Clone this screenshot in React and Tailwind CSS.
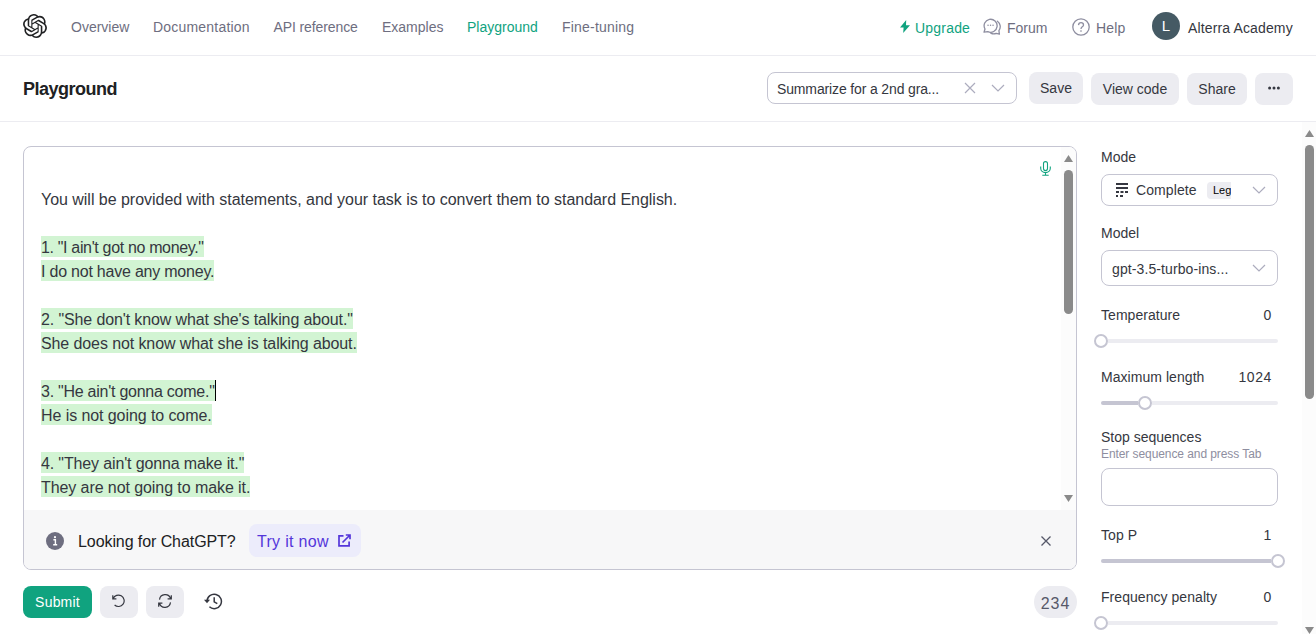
import React from "react";
import { SiOpenai } from "react-icons/si";

const navLinks = [
  { label: "Overview", cls: "w-[82px] text-[#6e6e80]" },
  { label: "Documentation", cls: "w-[120.5px] tracking-[0.2px] text-[#6e6e80]" },
  { label: "API reference", cls: "w-[108.5px] tracking-[-0.1px] text-[#6e6e80]" },
  { label: "Examples", cls: "w-[85px] text-[#6e6e80]" },
  { label: "Playground", cls: "w-[95px] text-[#10a37f]" },
  { label: "Fine-tuning", cls: "w-[90px] tracking-[0.2px] text-[#6e6e80]" },
];

function Chevron() {
  return (
    <svg className="h-3 w-3.5 shrink-0" viewBox="0 0 14 12" fill="none" stroke="#acacbe" strokeWidth="1.2">
      <path d="M1 3l6 6 6-6" />
    </svg>
  );
}

function ForumIcon() {
  return (
    <svg className="mb-0.5 h-[18px] w-[18px]" viewBox="0 0 18 18" fill="none" stroke="#8e8ea0" strokeWidth="1.3" strokeLinecap="round" strokeLinejoin="round">
      <path d="M1 14.2l1-3.2A6.5 6.5 0 1 1 4.8 13.6L1 14.2z" />
      <path d="M14.4 3.2a6.6 6.6 0 0 1 1.5 9.4l.5 3.6-3.2-.8a6.6 6.6 0 0 1-5.4-.3" />
      <path d="M5 7.3h.1M7.5 7.3h.1M10 7.3h.1" strokeWidth="1.4" />
    </svg>
  );
}

function HelpIcon() {
  return (
    <svg className="mb-0.5 h-[18px] w-[18px]" viewBox="0 0 18 18" fill="none" stroke="#8e8ea0" strokeWidth="1.3">
      <circle cx="9" cy="9" r="8.2" />
      <path d="M6.5 7.1C6.6 5.6 7.6 4.7 9 4.7s2.5.9 2.5 2.2c0 1.9-2.5 1.9-2.5 4" />
      <circle cx="9" cy="13" r=".5" fill="#8e8ea0" strokeWidth=".6" />
    </svg>
  );
}

function Header() {
  return (
    <header className="flex h-14 shrink-0 items-center border-b border-[#ececf1] pl-[23px] pr-[23px] text-sm">
      <SiOpenai className="mb-[3px] h-6 w-6 text-[#202123]" />
      <nav className="mb-0.5 ml-6 flex">
        {navLinks.map((l) => (
          <a key={l.label} className={"whitespace-nowrap " + l.cls}>{l.label}</a>
        ))}
      </nav>
      <div className="ml-auto flex items-center">
        <svg className="mb-0.5 mr-[5px] h-[13px] w-2.5" viewBox="0 0 10 13" fill="#10a37f">
          <path d="M6.2 0L0 7.5h3.6L3.2 13 10 5.2H6z" />
        </svg>
        <span className="w-[68px] tracking-[0.2px] text-[#10a37f]">Upgrade</span>
        <ForumIcon />
        <span className="ml-[6px] w-[65px] text-[#6e6e80]">Forum</span>
        <HelpIcon />
        <span className="ml-[6px] w-[56px] tracking-[0.2px] text-[#6e6e80]">Help</span>
        <div className="mb-[3px] flex h-7 w-7 items-center justify-center rounded-full bg-[#455a64] text-[15px] text-white">L</div>
        <span className="ml-2 w-[105px] whitespace-nowrap tracking-[0.14px] text-[#353740]">Alterra Academy</span>
      </div>
    </header>
  );
}

function Toolbar() {
  const btn = "flex h-8 items-center justify-center rounded-lg bg-[#ececf1] text-sm text-[#353740]";
  return (
    <div className="flex h-[66px] shrink-0 items-center border-b border-[#ececf1] px-[23px]">
      <h1 className="pt-px text-[18px] font-bold tracking-[-0.5px] text-[#202123]">Playground</h1>
      <div className="mb-0.5 ml-auto flex items-center">
        <div className="flex h-8 w-[250px] items-center rounded-lg border border-[#c5c5d2] pl-[9px] pr-[11px] text-sm text-[#353740]">
          <span className="w-[187px] whitespace-nowrap pt-0.5 tracking-[-0.14px]">Summarize for a 2nd gra...</span>
          <svg className="h-3 w-3 shrink-0" viewBox="0 0 12 12" stroke="#acacbe" strokeWidth="1.2"><path d="M1 1l10 10M11 1L1 11" /></svg>
          <span className="ml-auto flex"><Chevron /></span>
        </div>
        <button className={btn + " ml-3 w-[54px]"}>Save</button>
        <button className={btn + " ml-2 mt-0.5 w-[88px]"}>View code</button>
        <button className={btn + " ml-2 mt-0.5 w-[60px]"}>Share</button>
        <button className={btn + " ml-2 mt-0.5 w-[38px]"}>
          <svg className="mb-0.5 h-3 w-3" viewBox="0 0 12 12" fill="#353740"><circle cx="1.6" cy="6" r="1.5" /><circle cx="6" cy="6" r="1.5" /><circle cx="10.4" cy="6" r="1.5" /></svg>
        </button>
      </div>
    </div>
  );
}

const examples = [
  { q: '1. "I ain\'t got no money."', a: "I do not have any money.", qc: "tracking-[-0.34px]", ac: "tracking-[-0.22px]" },
  { q: '2. "She don\'t know what she\'s talking about."', a: "She does not know what she is talking about.", qc: "tracking-[-0.12px]", ac: "tracking-[-0.1px]" },
  { q: '3. "He ain\'t gonna come."', a: "He is not going to come.", qc: "tracking-[-0.25px]", ac: "tracking-[-0.08px]", caret: true },
  { q: '4. "They ain\'t gonna make it."', a: "They are not going to make it.", qc: "tracking-[-0.14px]", ac: "tracking-[-0.08px]" },
];

function Arrow({ up }) {
  return (
    <svg className="h-[7px] w-[9px]" viewBox="0 0 9 7" fill="#8a8a8a">
      <path d={up ? "M4.5 0L9 7H0z" : "M4.5 7L0 0h9z"} />
    </svg>
  );
}

function Editor() {
  const line = "-mt-px h-[21px] whitespace-nowrap bg-[#d2f4d3] leading-[23px] ";
  return (
    <section className="flex h-[424px] w-[1054px] flex-col overflow-hidden rounded-lg border border-[#c5c5d2]">
      <div className="flex h-[363px] shrink-0">
        <div className="flex-1 pl-[17px] pt-[41px] text-base leading-6 text-[#353740]">
          <p className="tracking-[-0.03px]">You will be provided with statements, and your task is to convert them to standard English.</p>
          <div className="pt-px">
            {examples.map((e) => (
              <div key={e.q} className="mb-6 first:mt-6">
                <div className="flex h-6"><span className={line + e.qc}>{e.q}</span>{e.caret && <i className="-mt-px h-[21px] w-px bg-black" />}</div>
                <div className="flex h-6"><span className={line + e.ac}>{e.a}</span></div>
              </div>
            ))}
          </div>
        </div>
        <svg className="mr-2.5 mt-[14px] h-[15px] w-[11px]" viewBox="0 0 11 15" fill="none" stroke="#10a37f" strokeWidth="1.1">
          <rect x="3.5" y=".6" width="4" height="9" rx="2" />
          <path d="M.7 5.5v1.8a4.8 4.3 0 0 0 9.6 0V5.5M5.5 11.6v2.7M2.3 14.2h6.4" />
        </svg>
        <div className="flex w-[15px] flex-col items-center bg-[#fcfcfc] pb-2 pt-2">
          <Arrow up />
          <div className="mt-2 h-[144px] w-[9px] rounded-full bg-[#8a8a8a]" />
          <div className="mt-auto flex"><Arrow /></div>
        </div>
      </div>
      <div className="flex flex-1 items-center bg-[#f7f7f8] pl-[22px] pr-[25px] pt-0.5 text-base text-[#202123]">
        <svg className="h-[18px] w-[18px]" viewBox="0 0 18 18"><circle cx="9" cy="9" r="9" fill="#6e6e80" /><path d="M7.4 7.8H9.4V12.8M7.2 12.8h4" fill="none" stroke="#fff" strokeWidth="1.4" /><circle cx="9" cy="5.2" r="1.1" fill="#fff" /></svg>
        <span className="ml-[14px] w-[171px] whitespace-nowrap pt-[3px] tracking-[-0.08px]">Looking for ChatGPT?</span>
        <div className="flex h-[33px] w-28 items-center rounded-lg bg-[#ececfb] pl-2 text-[#5436da]">
          <span className="w-[81px] whitespace-nowrap pt-0.5 tracking-[0.3px]">Try it now</span>
          <svg className="h-[13px] w-[13px]" viewBox="0 0 13 13" fill="none" stroke="#5436da" strokeWidth="1.7"><path d="M5.5 1.8H1v10.1h10.1V7.5M7.8 1h4.2v4.2M12 1L4.5 8.5" /></svg>
        </div>
        <svg className="ml-auto h-2.5 w-2.5" viewBox="0 0 10 10" stroke="#565869" strokeWidth="1.3"><path d="M.5.5l9 9M9.5.5l-9 9" /></svg>
      </div>
    </section>
  );
}

function Actions() {
  const box = "ml-2 flex h-8 w-[38px] items-center justify-center rounded-lg bg-[#ececf1]";
  return (
    <div className="mt-4 flex w-[1054px] items-center">
      <button className="h-8 w-[69px] rounded-lg bg-[#10a37f] text-sm tracking-[0.2px] text-white">Submit</button>
      <button className={box}>
        <svg className="mb-0.5 h-3.5 w-3.5" viewBox="0 0 14 14" fill="none" stroke="#353740" strokeWidth="1.2"><path d="M.8 1.2v3.6h3.6M1.2 4.6A5.7 5.7 0 1 1 2.6 11" /></svg>
      </button>
      <button className={box}>
        <svg className="mb-0.5 h-3.5 w-3.5" viewBox="0 0 14 14" fill="none" stroke="#353740" strokeWidth="1.2"><path d="M13.3 1.2v3.7H9.6M.7 12.8V9.1h3.7M1.5 5.6A5.7 5.7 0 0 1 12.6 4.7M12.5 8.4A5.7 5.7 0 0 1 1.4 9.3" /></svg>
      </button>
      <svg className="mb-0.5 ml-5 h-[17px] w-[19px]" viewBox="0 0 19 17" fill="none" stroke="#353740" strokeWidth="1.5"><path d="M3 8.3A7.2 7.2 0 1 1 5.4 13.8M10.2 4.2v4.6l3.1 1.8" /><path d="M0 6.8h6L3 10.2z" fill="#353740" stroke="none" /></svg>
      <span className="ml-auto flex h-8 w-[43px] items-center justify-center rounded-2xl bg-[#ececf1] pt-[3px] text-base tracking-[0.9px] text-[#565869]">234</span>
    </div>
  );
}

function Slider({ label, value, fill, knob, cls = "" }) {
  return (
    <div className={"h-[62px] " + cls}>
      <div className="flex h-5 items-center justify-between pr-1.5"><span className="tracking-[0.05px]">{label}</span><span className="tracking-[0.6px]">{value}</span></div>
      <div className="mt-[9px] flex h-3.5 items-center">
        <div className={"h-1 rounded-l-full bg-[#c5c5d2] " + fill} />
        <div className={"h-3.5 w-3.5 shrink-0 rounded-full border-2 border-[#c5c5d2] bg-white " + knob} />
        <div className="h-1 flex-1 rounded-r-full bg-[#ececf1]" />
      </div>
    </div>
  );
}

function Sidebar() {
  return (
    <aside className="ml-6 w-[177px] shrink-0 text-sm text-[#353740]">
      <div className="mt-[1px] leading-5">Mode</div>
      <div className="mt-[7px] flex h-8 items-center rounded-lg border border-[#c5c5d2] pl-[14px] pr-[11px]">
        <svg className="h-3.5 w-3 shrink-0" viewBox="0 0 12 14" fill="#353740"><path d="M0 0h12v2H0zM0 4h12v2H0zM0 8h3v2H0zM4.5 8h3v2h-3zM9 8h3v2H9zM0 12h2v2H0zM4 12h3v2H4z" /></svg>
        <span className="ml-2 w-[71px] tracking-[0.1px]">Complete</span>
        <span className="flex h-[17px] w-6 items-center overflow-hidden rounded-l bg-[#ececf1] pl-1.5 pt-0.5 text-[11px] text-black">Leg</span>
        <span className="ml-auto flex"><Chevron /></span>
      </div>
      <div className="mt-[17px] leading-5">Model</div>
      <div className="mt-[7px] flex h-9 items-center rounded-lg border border-[#c5c5d2] pl-2.5 pr-[11px]">
        <span className="pt-0.5 tracking-[0.1px]">gpt-3.5-turbo-ins...</span>
        <span className="ml-auto flex"><Chevron /></span>
      </div>
      <Slider cls="mt-[19px]" label="Temperature" value="0" fill="w-0" knob="-ml-[7px]" />
      <Slider label="Maximum length" value="1024" fill="w-[37px]" knob="" />
      <div className="-mt-[2px] leading-5">Stop sequences</div>
      <div className="text-xs leading-[14px] tracking-[-0.08px] text-[#8e8ea0]">Enter sequence and press Tab</div>
      <div className="mt-[7px] h-[38px] rounded-lg border border-[#c5c5d2]" />
      <Slider cls="mt-[19px]" label="Top P" value="1" fill="w-[170px]" knob="-mr-[7px]" />
      <Slider label="Frequency penalty" value="0" fill="w-0" knob="-ml-[7px]" />
    </aside>
  );
}

export default function App() {
  return (
    <div className="flex h-[634px] w-[1316px] flex-col overflow-hidden bg-white font-['Liberation_Sans',Arial,sans-serif]">
      <Header />
      <Toolbar />
      <main className="flex h-[512px]">
        <div className="flex h-[512px] flex-1 overflow-hidden pl-[23px] pt-6">
          <div>
            <Editor />
            <Actions />
          </div>
          <Sidebar />
        </div>
        <div className="flex w-[14px] shrink-0 flex-col items-center bg-[#fcfcfc] pt-2">
          <Arrow up />
          <div className="mt-2 h-[254px] w-[9px] rounded-full bg-[#8a8a8a]" />
          <div className="mt-auto flex"><Arrow /></div>
        </div>
      </main>
    </div>
  );
}
